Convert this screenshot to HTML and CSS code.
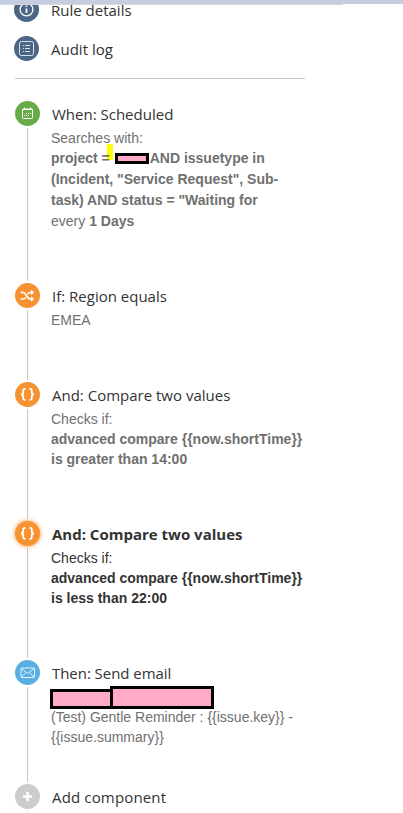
FILE: index.html
```html
<!DOCTYPE html>
<html lang="en">
  <head>
    <meta charset="UTF-8" />
    <meta name="viewport" content="width=device-width, initial-scale=1.0" />
    <title>Automation rule</title>
    <link rel="stylesheet" href="styles.css">
  </head>
  <body>
    <div class="top-bar"></div>
    <div class="top-shadow"></div>

    <div class="sidebar">
      <div class="menu">
        <div class="menu-item">
          <div class="icon navy">
            <svg width="25" height="25" viewBox="0 0 25 25" fill="none" stroke="#fff">
              <circle cx="12.5" cy="12.5" r="6.4" stroke-width="1.3" />
              <path d="M12.5 11.5v4.5M12.5 8.5v1.6" stroke-width="1.7" />
            </svg>
          </div>
          <span>Rule details</span>
        </div>
        <div class="menu-item">
          <div class="icon navy">
            <svg width="25" height="25" viewBox="0 0 25 25" fill="none" stroke="#dce3ec">
              <rect x="5.5" y="5.5" width="14" height="14" rx="2" />
              <path d="M9 9.5h1M11 9.5h5M9 12.5h1M11 12.5h5M9 15.5h1M11 15.5h5" />
            </svg>
          </div>
          <span>Audit log</span>
        </div>
      </div>

      <div class="steps">
        <div class="step">
          <div class="rail">
            <div class="icon green">
              <svg width="25" height="25" viewBox="0 0 25 25" fill="none" stroke="#fff">
                <rect x="7.5" y="8" width="10" height="9.5" rx="1" />
                <path d="M7.5 8.500h10M9.500 6.500v2M15.500 6.500v2" />
                <path d="M11 12.500h5M9 14.500h5.500" stroke-dasharray="1 1" />
              </svg>
            </div>
            <div class="line"></div>
          </div>
          <div class="content">
            <h2>When: Scheduled</h2>
            <p>Searches with:</p>
            <p class="query">
              project <span class="marker">=</span> <span class="redacted key"></span>AND issuetype in<br>
              (Incident, "Service Request", Sub-<br>
              task) AND status = "Waiting for
            </p>
            <p>every <b>1 Days</b></p>
          </div>
        </div>

        <div class="step">
          <div class="rail">
            <div class="icon orange">
              <svg width="25" height="25" viewBox="0 0 25 25" fill="none" stroke="#fff" stroke-width="1.6">
                <path d="M5.5 9.5H8c3.500 0 3.500 6.500 7 6.500h2.500M5.500 16H8c1.200 0 2-.6 2.600-1.600M12.700 11c.6-.9 1.300-1.500 2.300-1.500h2.500" />
                <path d="M16 6.800v5.400l3.300-2.700zM16 13.300v5.400l3.300-2.700z" fill="#fff" stroke="none" />
              </svg>
            </div>
            <div class="line"></div>
          </div>
          <div class="content">
            <h2>If: Region equals</h2>
            <p>EMEA</p>
          </div>
        </div>

        <div class="step">
          <div class="rail">
            <div class="icon orange">
              <svg width="25" height="25" viewBox="0 0 25 25" fill="none" stroke="#fff" stroke-width="1.8">
                <path d="M10.500 7H9.700Q8.200 7 8.200 8.500V10.500Q8.200 12.500 6 12.500Q8.200 12.500 8.200 14.500V16.300Q8.200 17.800 9.700 17.800H10.500" />
                <path d="M14.500 7H15.300Q16.800 7 16.800 8.500V10.500Q16.800 12.500 19 12.500Q16.800 12.500 16.800 14.500V16.300Q16.800 17.800 15.300 17.800H14.500" />
              </svg>
            </div>
            <div class="line"></div>
          </div>
          <div class="content">
            <h2>And: Compare two values</h2>
            <p>Checks if:</p>
            <p><b>advanced compare {{now.shortTime}}<br>is greater than 14:00</b></p>
          </div>
        </div>

        <div class="step active">
          <div class="rail">
            <div class="icon orange">
              <svg width="25" height="25" viewBox="0 0 25 25" fill="none" stroke="#fff" stroke-width="1.8">
                <path d="M10.500 7H9.700Q8.200 7 8.200 8.500V10.500Q8.200 12.500 6 12.500Q8.200 12.500 8.200 14.500V16.300Q8.200 17.800 9.700 17.800H10.500" />
                <path d="M14.500 7H15.300Q16.800 7 16.800 8.500V10.500Q16.800 12.500 19 12.500Q16.800 12.500 16.800 14.500V16.300Q16.800 17.800 15.300 17.800H14.500" />
              </svg>
            </div>
            <div class="line"></div>
          </div>
          <div class="content">
            <h2>And: Compare two values</h2>
            <p>Checks if:</p>
            <p><b>advanced compare {{now.shortTime}}<br>is less than 22:00</b></p>
          </div>
        </div>

        <div class="step email">
          <div class="rail">
            <div class="icon blue">
              <svg width="25" height="25" viewBox="0 0 25 25" fill="none" stroke="#e6f4fc">
                <rect x="6" y="8" width="13.500" height="9.500" rx="1" />
                <path d="M6.500 8.500l6.200 5 6.200-5M6.500 17l4.300-4.500M19 17l-4.300-4.500" />
              </svg>
            </div>
            <div class="line"></div>
          </div>
          <div class="content">
            <h2>Then: Send email</h2>
            <div class="recipients">
              <span class="redacted first"></span>
              <span class="redacted second"></span>
            </div>
            <p>(Test) Gentle Reminder : {{issue.key}} -<br>{{issue.summary}}</p>
          </div>
        </div>

        <div class="step last">
          <div class="rail">
            <div class="icon gray">
              <svg width="25" height="25" viewBox="0 0 25 25" stroke="#fff" stroke-width="2.6">
                <path d="M12.5 8v9M8 12.5h9" />
              </svg>
            </div>
            <div class="line"></div>
          </div>
          <div class="content">
            <h2>Add component</h2>
          </div>
        </div>
      </div>
    </div>
  </body>
</html>
```

FILE: styles.css
```css
body {
  margin: 0;
  height: 813px;
  overflow: hidden;
  background-color: #fff;
  color: #707070;
  font-family: "Liberation Sans", Arial, sans-serif;
  font-size: 14px;
  line-height: 20px;
}

/* header edge, stays above the scrolled menu */
.top-bar {
  position: relative;
  z-index: 2;
  height: 4px;
  background-color: #c5cee0;
}

.top-shadow {
  position: relative;
  z-index: 2;
  width: 343px;
  height: 1px;
  background-color: #d5d7dc;
}

.sidebar {
  width: 290px;
  margin-top: -8px;
  margin-left: 15px;
}

.menu {
  display: flex;
  flex-direction: column;
  gap: 14px;
  height: 81px;
  border-bottom: 1px solid #c8c8c8;
}

.menu-item {
  display: flex;
  gap: 12px;
  height: 25px;
  margin-left: -1px;
}

.menu-item span,
h2 {
  margin: 0;
  color: #333;
  font-family: "Open Sans", "Noto Sans", sans-serif;
  font-size: 15px;
  font-weight: 400;
  line-height: 27px;
  white-space: nowrap;
}

.icon {
  flex: none;
  width: 25px;
  height: 25px;
  border-radius: 50%;
}

.icon svg {
  display: block;
}

.navy {
  background-color: #4a6785;
}

.green {
  background-color: #67ab49;
}

.orange {
  background-color: #f79232;
}

.blue {
  background-color: #59afe1;
}

.gray {
  background-color: #ccc;
}

.steps {
  margin-top: 20px;
}

/* tip of the rail above the first icon */
.steps::before {
  content: "";
  display: block;
  width: 1px;
  height: 1px;
  margin: 0 0 1px 12px;
  background-color: #ddd;
}

.step {
  display: flex;
  gap: 11px;
}

.rail {
  display: flex;
  flex-direction: column;
  align-items: center;
  width: 25px;
}

.line {
  flex: 1;
  width: 1px;
  min-height: 1px;
  margin: 2px 0;
  background-color: #c8c8c8;
}

.content {
  padding-bottom: 52px;
  white-space: nowrap;
}

.content h2 {
  padding-left: 1px;
}

.content p {
  margin: 0;
}

.content .query {
  font-weight: bold;
  line-height: 21px;
}

.marker {
  position: relative;
}

/* highlighter stroke behind the text */
.marker::before {
  content: "";
  position: absolute;
  z-index: -1;
  top: -6px;
  left: 5px;
  width: 6px;
  height: 16px;
  background-color: #ff0;
}

.redacted {
  box-sizing: border-box;
  border: 3px solid #000;
  background-color: #ffaac8;
}

.key {
  display: inline-block;
  width: 34px;
  height: 11px;
  margin: 0 1px 0 1px;
  vertical-align: -1px;
}

.recipients {
  display: flex;
  align-items: flex-end;
  height: 22px;
  margin: 0 0 -2px -1px;
}

.first {
  width: 63px;
  height: 20px;
}

.second {
  width: 104px;
  height: 23px;
  margin-left: -3px;
}

.active,
.active h2 {
  color: #333;
}

.active h2 {
  font-weight: 700;
}

.active .icon {
  box-shadow: 0 0 5px #f79232;
}

.email .content {
  padding-bottom: 37px;
}

.email h2 {
  letter-spacing: -0.05px;
}

.last .content {
  padding-bottom: 0;
}

.last h2 {
  letter-spacing: 0.15px;
}
```
